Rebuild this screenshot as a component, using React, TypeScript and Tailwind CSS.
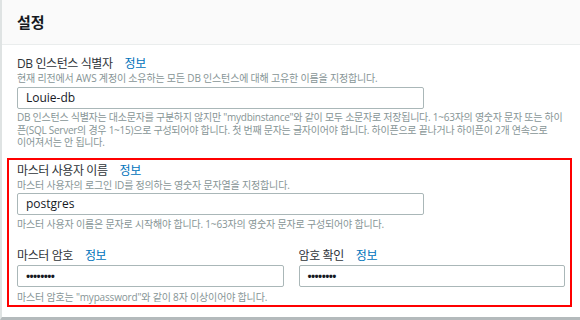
import React from "react";

const FONT = {
  fontFamily: '"Open Sans", "Noto Sans CJK KR", sans-serif',
};

function Label({ text }: { text: string }) {
  return (
    <div className="flex items-center h-[14px] text-[12px] leading-[14px] tracking-[-0.4px] text-[#2e3338]">
      <span>{text}</span>
      <a className="ml-[12px] text-[#0073bb]">정보</a>
    </div>
  );
}

function Field({ value, password }: { value: string; password?: boolean }) {
  return (
    <div className="h-[22px] w-full border border-[#aab7b8] rounded-[2px] bg-white flex items-center px-[8px] text-[12px] text-[#16191f]">
      {password ? (
        <span className="text-[11px] font-bold tracking-[-0.6px]">••••••••</span>
      ) : (
        value
      )}
    </div>
  );
}

export default function App() {
  return (
    <div
      style={FONT}
      className="w-[580px] h-[320px] bg-white border-l-2 border-b-[3px] border-l-[#dfe3e3] border-b-[#b4babc] flex flex-col overflow-hidden"
    >
      <div className="h-[45px] shrink-0 bg-[#fafafa] border-b border-[#eaeded] flex items-center pl-[15px]">
        <h2 className="text-[15px] font-bold text-[#16191f] leading-none">설정</h2>
      </div>

      <div className="pl-[15px] pr-[15px] pt-[12px]">
        <Label text="DB 인스턴스 식별자" />
        <p className="text-[10px] leading-[14px] tracking-[-0.18px] text-[#879596]">
          현재 리전에서 AWS 계정이 소유하는 모든 DB 인스턴스에 대해 고유한 이름을 지정합니다.
        </p>
        <div className="mt-[2px] w-[407px]">
          <Field value="Louie-db" />
        </div>
        <p className="mt-[2px] text-[10px] leading-[12.5px] tracking-[-0.25px] text-[#879596] whitespace-nowrap">
          DB 인스턴스 식별자는 대소문자를 구분하지 않지만 "mydbinstance"와 같이 모두 소문자로 저장됩니다. 1~63자의 영숫자 문자 또는 하이
          <br />
          픈(SQL Server의 경우 1~15)으로 구성되어야 합니다. 첫 번째 문자는 글자이어야 합니다. 하이픈으로 끝나거나 하이픈이 2개 연속으로
          <br />
          이어져서는 안 됩니다.
        </p>

        <div className="mt-[9px] -ml-[10px] -mr-[7px] border-2 border-[#ff0000] pl-[8px] pr-[5px] pt-[4px] pb-[1px]">
          <Label text="마스터 사용자 이름" />
          <p className="text-[10px] leading-[14px] tracking-[-0.18px] text-[#879596]">
            마스터 사용자의 로그인 ID를 정의하는 영숫자 문자열을 지정합니다.
          </p>
          <div className="mt-[1px] w-[407px]">
            <Field value="postgres" />
          </div>
          <p className="mt-[3px] text-[10px] leading-[12.5px] tracking-[-0.18px] text-[#879596]">
            마스터 사용자 이름은 문자로 시작해야 합니다. 1~63자의 영숫자 문자로 구성되어야 합니다.
          </p>

          <div className="mt-[19px] grid grid-cols-2 gap-[15px]">
            <div>
              <Label text="마스터 암호" />
              <div className="mt-[2px]">
                <Field value="password" password />
              </div>
            </div>
            <div>
              <Label text="암호 확인" />
              <div className="mt-[2px]">
                <Field value="password" password />
              </div>
            </div>
          </div>
          <p className="mt-[4px] text-[10px] leading-[12.5px] tracking-[-0.18px] text-[#879596]">
            마스터 암호는 "mypassword"와 같이 8자 이상이어야 합니다.
          </p>
        </div>
      </div>
    </div>
  );
}
